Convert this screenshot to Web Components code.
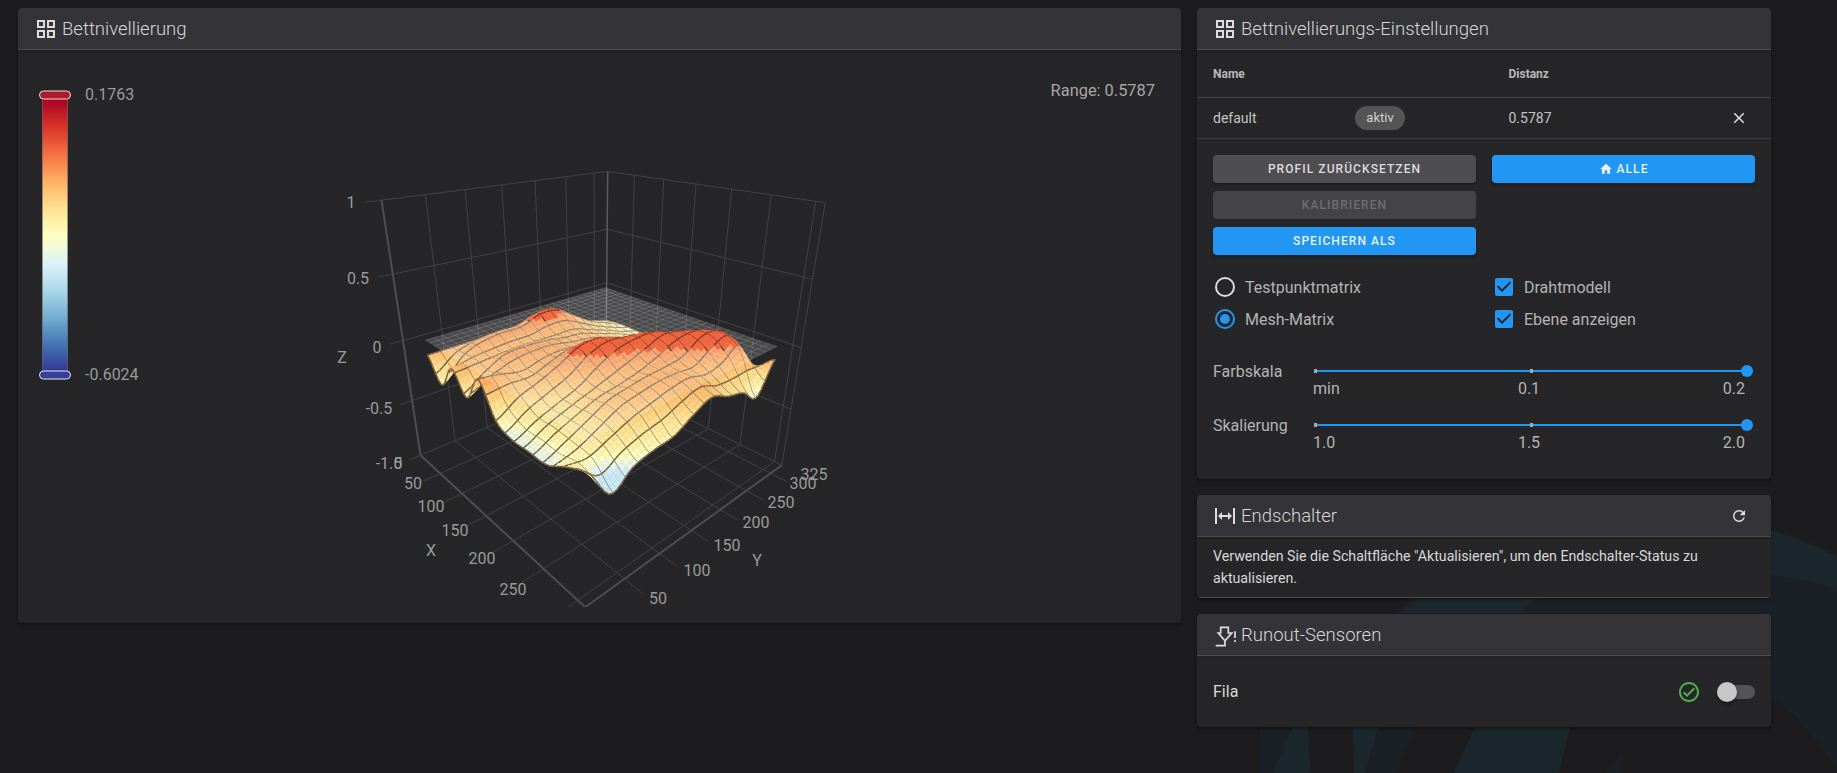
<!DOCTYPE html>
<html lang="de"><head><meta charset="utf-8"><title>Heightmap</title>
<style>
html,body{margin:0;padding:0;height:773px;overflow:hidden;background:#1c1c1e;font-family:Roboto,"Liberation Sans",sans-serif;color:#ddd}
</style></head><body>
<kl-page>
  <kl-panel slot="left" heading="Bettnivellierung" icon="grid"><bed-plot></bed-plot></kl-panel>
  <div slot="right" style="display:contents">
    <kl-panel heading="Bettnivellierungs-Einstellungen" icon="grid"><mesh-settings></mesh-settings></kl-panel>
    <kl-panel heading="Endschalter" icon="endstop" action="refresh"><endstop-note>Verwenden Sie die Schaltfläche "Aktualisieren", um den Endschalter-Status zu aktualisieren.</endstop-note></kl-panel>
    <kl-panel heading="Runout-Sensoren" icon="runout"><sensor-row name="Fila"></sensor-row></kl-panel>
  </div>
</kl-page>
<script>
const ICON={
grid:'M3 11H11V3H3M5 5H9V9H5M13 21H21V13H13M15 15H19V19H15M3 21H11V13H3M5 15H9V19H5M13 3V11H21V3M19 9H15V5H19Z',
endstop:'M9,11H15V8L19,12L15,16V13H9V16L5,12L9,8V11M2,20V4H4V20H2M20,20V4H22V20H20Z',
refresh:'M17.65,6.35C16.2,4.9 14.21,4 12,4A8,8 0 0,0 4,12A8,8 0 0,0 12,20C15.73,20 18.84,17.45 19.73,14H17.65C16.83,16.33 14.61,18 12,18A6,6 0 0,1 6,12A6,6 0 0,1 12,6C13.66,6 15.14,6.69 16.22,7.78L13,11H20V4L17.65,6.35Z',
close:'M19,6.41L17.59,5L12,10.59L6.41,5L5,6.41L10.59,12L5,17.59L6.41,19L12,13.41L17.59,19L19,17.59L13.41,12L19,6.41Z',
home:'M10,20V14H14V20H19V12H22L12,3L2,12H5V20H10Z',
radio:'M12,20A8,8 0 0,1 4,12A8,8 0 0,1 12,4A8,8 0 0,1 20,12A8,8 0 0,1 12,20M12,2A10,10 0 0,0 2,12A10,10 0 0,0 12,22A10,10 0 0,0 22,12A10,10 0 0,0 12,2Z',
radioOn:'M12,20A8,8 0 0,1 4,12A8,8 0 0,1 12,4A8,8 0 0,1 20,12A8,8 0 0,1 12,20M12,2A10,10 0 0,0 2,12A10,10 0 0,0 12,22A10,10 0 0,0 22,12A10,10 0 0,0 12,2M12,7A5,5 0 0,0 7,12A5,5 0 0,0 12,17A5,5 0 0,0 17,12A5,5 0 0,0 12,7Z',
check:'M10,17L5,12L6.41,10.58L10,14.17L17.59,6.58L19,8M19,3H5C3.89,3 3,3.89 3,5V19A2,2 0 0,0 5,21H19A2,2 0 0,0 21,19V5C21,3.89 20.1,3 19,3Z',
okCircle:'M12 2C6.5 2 2 6.5 2 12S6.5 22 12 22 22 17.5 22 12 17.5 2 12 2M12 20C7.59 20 4 16.41 4 12S7.59 4 12 4 20 7.59 20 12 16.41 20 12 20M16.59 7.58L10 14.17L7.41 11.59L6 13L10 17L18 9L16.59 7.58Z'
};
function svgIcon(name,size,color){return `<svg width="${size}" height="${size}" viewBox="0 0 24 24" style="display:block;flex:none"><path fill="${color}" d="${ICON[name]}"/></svg>`}
const RUNOUT=`<svg width="24" height="24" viewBox="0 0 24 24" style="display:block;flex:none" fill="none" stroke="#ddd" stroke-width="1.7"><path d="M7.7 4.3H15.3V10H18.7L12 17.7L5.3 10H7.7Z"/><path d="M2.7 22.7H12V17.7"/><path d="M22 8.3V15M22 17V19"/></svg>`;

class KlPage extends HTMLElement{constructor(){super();this.attachShadow({mode:'open'}).innerHTML=`<style>
:host{display:block;position:relative;width:1837px;height:773px;overflow:hidden}
.logo{position:absolute;left:0;top:0;z-index:0}
.grid{position:relative;z-index:1;display:grid;grid-template-columns:1163px 574px;column-gap:16px;padding:8px 66px 0 18px;align-items:start}
.col{display:flex;flex-direction:column;gap:16px}
</style>
<svg class="logo" width="1837" height="773" viewBox="0 0 1837 773">
<path fill="#1b2026" d="M1395 613L1420 590H1772V700C1800 720 1820 745 1837 770V773H1260V700H1771V613Z"/>
<path fill="#1c272d" d="M1760 528C1790 534 1815 545 1837 557V590C1815 582 1795 578 1760 574Z"/>
<path fill="#1b2026" d="M1760 574C1795 578 1815 582 1837 590V773H1770C1790 773 1760 700 1760 690Z"/>
<path fill="#1c1c1e" d="M1772 697C1800 715 1820 745 1837 771V773H1772Z"/>
<path fill="#1c272d" d="M1402 613L1420 596H1540L1520 613Z"/>
<path fill="#1c272d" d="M1273 773L1296 720H1307L1311 773Z"/>
<path fill="#1c272d" d="M1352 720H1380L1365 773H1354Z"/>
<path fill="#1c1c1e" d="M1311 773L1307 720H1352L1354 773Z"/>
<path fill="#1c1c1e" d="M1420 720L1396 773H1454L1478 720Z"/>
<path fill="#1c272d" d="M1454 773L1478 720H1572L1559 773Z" opacity=".9"/>
<path fill="#1c1c1e" d="M1559 773L1572 720H1772V773Z"/>
<path fill="#1b2026" d="M1604 773L1625 750L1620 773Z"/>
</svg>
<div class="grid"><div><slot name="left"></slot></div><div class="col"><slot name="right"></slot></div></div>`}}
customElements.define('kl-page',KlPage);

class KlPanel extends HTMLElement{connectedCallback(){if(this.shadowRoot)return;
const ic=this.getAttribute('icon');const a=this.getAttribute('action');
this.attachShadow({mode:'open'}).innerHTML=`<style>
:host{display:block;background:#262628;border-radius:4px;box-shadow:0 2px 3px rgba(0,0,0,.35);overflow:hidden}
header{display:flex;align-items:center;height:41px;padding:0 23px 0 16px;background:#333338;border-bottom:1px solid #4c4c50;box-shadow:0 2px 4px rgba(0,0,0,.2);position:relative}
h2{margin:0 0 0 4px;font:300 18.55px/24px Roboto,sans-serif;color:#d6d6d6;flex:1}
</style><header>${ic==='runout'?RUNOUT:svgIcon(ic,24,'#ddd')}<h2>${this.getAttribute('heading')}</h2>${a?svgIcon(a,18,'#ddd'):''}</header><slot></slot>`}}
customElements.define('kl-panel',KlPanel);

class KlButton extends HTMLElement{connectedCallback(){if(this.shadowRoot)return;
this.attachShadow({mode:'open'}).innerHTML=`<style>
:host{display:flex;align-items:center;justify-content:center;gap:4px;height:28px;border-radius:4px;background:#4d4d52;color:#dcdcdc;font:500 12px/1 Roboto,sans-serif;letter-spacing:1.07px;box-shadow:0 2px 2px rgba(0,0,0,.25)}
:host([kind=primary]){background:#2196f3;color:#e4f0fa}
:host([disabled]){background:#444446;color:#6f6f71;box-shadow:none}
</style>${this.hasAttribute('home')?svgIcon('home',14,'#e4f0fa'):''}<slot></slot>`}}
customElements.define('kl-button',KlButton);

class KlOption extends HTMLElement{connectedCallback(){if(this.shadowRoot)return;
const t=this.getAttribute('type');const on=this.hasAttribute('on');
const icon=t==='check'?svgIcon('check',24,'#2196f3'):on?svgIcon('radioOn',24,'#2196f3'):svgIcon('radio',24,'#dcdcdc');
this.attachShadow({mode:'open'}).innerHTML=`<style>
:host{display:flex;align-items:center;gap:8px;height:32px;font:400 16px/24px Roboto,sans-serif;color:#b4b4b4}
div{padding-top:1px}
</style>${icon}<div><slot></slot></div>`}}
customElements.define('kl-option',KlOption);

class KlSlider extends HTMLElement{connectedCallback(){if(this.shadowRoot)return;
const t=this.getAttribute('ticks').split(',');
this.attachShadow({mode:'open'}).innerHTML=`<style>
:host{display:grid;grid-template-columns:102px 432px;height:54px;font:400 16px/20px Roboto,sans-serif;color:#b4b4b4}
.lab{height:24px;line-height:26px}
.tr{height:2px;background:#2196f3;margin-top:11px;position:relative}
.t{position:absolute;top:-1px;width:3px;height:4px;background:#a8a8a8}
.k{position:absolute;right:-6px;top:-5px;width:12px;height:12px;border-radius:50%;background:#2196f3}
.ticks{display:grid;grid-template-columns:1fr auto 1fr;margin:7px 0 0 -2px;width:432px}
.ticks span:last-child{justify-self:end}
</style><div class="lab">${this.getAttribute('label')}</div>
<div><div class="tr"><i class="t" style="left:-1px"></i><i class="t" style="left:215px"></i><i class="k"></i></div>
<div class="ticks"><span>${t[0]}</span><span>${t[1]}</span><span>${t[2]}</span></div></div>`}}
customElements.define('kl-slider',KlSlider);

class MeshSettings extends HTMLElement{constructor(){super();this.attachShadow({mode:'open'}).innerHTML=`<style>
:host{display:block;font:400 14px/20px Roboto,sans-serif;color:#c4c4c4}
.r{display:grid;grid-template-columns:142px 153.5px 1fr 36px;align-items:center;padding:0 16px;}
.head{height:47px;border-bottom:1px solid #434345;font-weight:700;font-size:12px;color:#b8b8b8}
.row{height:40px;border-bottom:1px solid #3c3c3e}
.chip{display:inline-flex;align-items:center;justify-content:center;width:50px;height:24px;border-radius:12px;background:#555;font-size:13px;color:#d0d0d0}
.x{justify-self:end;margin-right:7px}
.acts{display:grid;grid-template-columns:263px 263px;column-gap:16px;row-gap:8px;padding:16px 16px 0}
.opts{display:grid;grid-template-columns:263px 263px;column-gap:16px;padding:16px 16px 0}
.sl{padding:24px 16px 12px}
</style>
<div class="r head"><span>Name</span><span></span><span style="grid-column:3">Distanz</span></div>
<div class="r row"><span>default</span><span><span class="chip">aktiv</span></span><span>0.5787</span><span class="x">${svgIcon('close',18,'#ddd')}</span></div>
<div class="acts"><kl-button>PROFIL ZURÜCKSETZEN</kl-button><kl-button kind="primary" home>ALLE</kl-button>
<kl-button disabled style="grid-column:1">KALIBRIEREN</kl-button><kl-button kind="primary" style="grid-column:1">SPEICHERN ALS</kl-button></div>
<div class="opts"><kl-option type="radio">Testpunktmatrix</kl-option><kl-option type="check" on>Drahtmodell</kl-option>
<kl-option type="radio" on>Mesh-Matrix</kl-option><kl-option type="check" on>Ebene anzeigen</kl-option></div>
<div class="sl"><kl-slider label="Farbskala" ticks="min,0.1,0.2"></kl-slider><kl-slider label="Skalierung" ticks="1.0,1.5,2.0"></kl-slider></div>`}}
customElements.define('mesh-settings',MeshSettings);

class EndstopNote extends HTMLElement{constructor(){super();this.attachShadow({mode:'open'}).innerHTML=`<style>
:host{display:block;padding:8px 16px 8px;font:400 14.2px/22px Roboto,sans-serif;color:#d8d8d8;border-bottom:1px solid #4a4a4c}
</style><slot></slot>`}}
customElements.define('endstop-note',EndstopNote);

class SensorRow extends HTMLElement{connectedCallback(){if(this.shadowRoot)return;
this.attachShadow({mode:'open'}).innerHTML=`<style>
:host{display:flex;align-items:center;height:71px;padding:0 16px;font:400 16px/20px Roboto,sans-serif;color:#d8d8d8}
span{flex:1;padding-top:1px}
.sw{position:relative;width:38px;height:20px;margin-left:16px}
.sw i{position:absolute;left:1px;right:0;top:3px;height:14px;border-radius:7px;background:#545456}
.sw b{position:absolute;left:0;top:0;width:20px;height:20px;border-radius:50%;background:#c8c8c8;box-shadow:0 2px 3px rgba(0,0,0,.4)}
</style><span>${this.getAttribute('name')}</span>${svgIcon('okCircle',24,'#4caf50')}<div class="sw"><i></i><b></b></div>`}}
customElements.define('sensor-row',SensorRow);

/* ---------- 3D plot ---------- */
const XM=310,YM=325;
function solveDLT(P){
  const n=11,A=Array.from({length:n},()=>new Array(n+1).fill(0));
  for(const [X,Y,Z,px,py] of P){
    const x=X/XM,y=Y/YM,z=Z,u=(px-600)/300,v=(py-400)/300;
    for(const r of [[x,y,z,1,0,0,0,0,-u*x,-u*y,-u*z,u],[0,0,0,0,x,y,z,1,-v*x,-v*y,-v*z,v]])
      for(let i=0;i<n;i++)for(let j=0;j<=n;j++)A[i][j]+=r[i]*r[j];
  }
  for(let c=0;c<n;c++){let m=c;for(let r=c+1;r<n;r++)if(Math.abs(A[r][c])>Math.abs(A[m][c]))m=r;
    [A[c],A[m]]=[A[m],A[c]];
    for(let r=0;r<n;r++)if(r!==c){const f=A[r][c]/A[c][c];for(let j=c;j<=n;j++)A[r][j]-=f*A[c][j]}}
  return A.map((r,i)=>r[n]/r[i]);
}
const M=solveDLT([
[0,0,-1,421.7,456],[0,0,1,381,200],[0,0,.5,392.7,274.3],[0,0,0,402.7,340.7],[0,0,-.5,411.7,400.7],
[XM,0,-1,583,607],
[XM,YM,-1,783,465],[XM,YM,1,825,202.7],[XM,YM,.5,813,279],[XM,YM,0,801,348],[XM,YM,-.5,790.7,408],
[0,YM,1,606.7,171.7],[0,YM,.5,606.7,229.3],[0,YM,0,606.7,282.7],
[0,50,1,426.7,194],[0,150,1,502.3,184.3],[0,250,1,565.7,176],
[50,YM,1,633.3,175],[150,YM,1,696.7,185],[250,YM,1,772.3,196]
]);
function pr(X,Y,Z){const x=X/XM,y=Y/YM,z=Z,w=M[8]*x+M[9]*y+M[10]*z+1;
  return [600+300*(M[0]*x+M[1]*y+M[2]*z+M[3])/w,400+300*(M[4]*x+M[5]*y+M[6]*z+M[7])/w]}
const L=(a,b,s,w)=>{const p=pr(...a),q=pr(...b);return `<line x1="${p[0].toFixed(1)}" y1="${p[1].toFixed(1)}" x2="${q[0].toFixed(1)}" y2="${q[1].toFixed(1)}" stroke="${s}" stroke-width="${w}"/>`};

const H=[
[-.12,-.12,-.12,-.12,-.12,-.10,-.08,-.18,-.24,-.28,-.32],
[-.30,-.12,-.05,-.03,-.03,.03,.02,-.08,-.18,-.24,-.30],
[-.10,-.10,-.10,-.09,-.09,-.08,-.08,-.14,-.20,-.26,-.30],
[-.26,-.14,-.05,-.04,-.05,-.08,-.10,-.15,-.20,-.26,-.30],
[-.05,-.08,-.12,-.08,-.06,-.08,-.10,-.14,-.20,-.24,-.26],
[-.28,-.18,-.12,-.05,.03,.04,-.02,-.06,-.12,-.17,-.20],
[-.34,-.26,-.20,-.14,-.04,.03,.05,.04,-.03,-.09,-.15],
[-.34,-.26,-.20,-.15,-.12,-.08,-.02,.05,.05,.00,-.12],
[-.34,-.28,-.20,-.12,-.09,-.07,-.07,-.06,.04,.05,-.07],
[-.26,-.30,-.24,-.18,-.14,-.10,-.08,-.12,-.10,-.02,-.22],
[-.20,-.44,-.34,-.30,-.28,-.20,-.14,-.20,-.24,-.34,-.10]];
const cr=(a,b,c,d,t)=>.5*(2*b+(c-a)*t+(2*a-5*b+4*c-d)*t*t+(3*b-a-3*c+d)*t*t*t);
function hAt(u,v){const n=10,fu=Math.min(u*n,n-1e-6),fv=Math.min(v*n,n-1e-6),i=Math.floor(fu),j=Math.floor(fv),tu=fu-i,tv=fv-j;
  const g=(a,b)=>H[Math.max(0,Math.min(n,a))][Math.max(0,Math.min(n,b))];
  const col=k=>cr(g(i+k,j-1),g(i+k,j),g(i+k,j+1),g(i+k,j+2),tv);
  return cr(col(-1),col(0),col(1),col(2),tu)}
const STOPS=[[49,54,149],[69,117,180],[116,173,209],[171,217,233],[224,243,248],[255,255,191],[254,224,144],[253,174,97],[244,109,67],[215,48,39],[165,0,38]];
function colr(t){t=Math.max(0,Math.min(.9999,t))*10;const i=Math.floor(t),f=t-i,a=STOPS[i],b=STOPS[i+1];
  return `rgb(${a.map((c,k)=>Math.round(c+(b[k]-c)*f)).join(',')})`}
const tOf=z=>z>=0?.8+z*.3:z>-.28?.76+.8*z:Math.max(.36,.536+(z+.28)*2);
const XA=16,XB=291,YA=20,YB=307,Z0=0;
function buildMesh(){
  const cells=18,sub=3,N=cells*sub;let below='',above='';
  const Xs=i=>XA+(XB-XA)*i/N,Ys=j=>YA+(YB-YA)*j/N,Zf=[];
  for(let i=0;i<=N;i++){Zf[i]=[];for(let j=0;j<=N;j++)Zf[i][j]=hAt(i/N,j/N)}
  const pt=(i,j)=>pr(Xs(i),Ys(j),Zf[i][j]);
  const f=p=>p[0].toFixed(1)+','+p[1].toFixed(1);
  for(let i=0;i<N;i++)for(let j=N-1;j>=0;j--){
    const a=pt(i,j),b=pt(i+1,j),c=pt(i+1,j+1),d=pt(i,j+1);
    const z=(Zf[i][j]+Zf[i+1][j]+Zf[i+1][j+1]+Zf[i][j+1])/4;
    const col=colr(tOf(z));
    const wire=z>=Z0?'rgb(135,62,40)':'rgb(120,98,70)';
    let s=`<polygon points="${f(a)} ${f(b)} ${f(c)} ${f(d)}" fill="${col}" stroke="${col}" stroke-width=".5"/>`;
    const seg=(p,q)=>`<line x1="${p[0].toFixed(1)}" y1="${p[1].toFixed(1)}" x2="${q[0].toFixed(1)}" y2="${q[1].toFixed(1)}" stroke="${wire}" stroke-width="1.5"/>`;
    if(i%sub===0)s+=seg(a,d);
    if(j%sub===0)s+=seg(a,b);
    if(i+1===N)s+=seg(b,c);
    if(j+1===N)s+=seg(d,c);
    if(z<Z0)below+=s;else above+=s;
  }
  let pl=`<polygon points="${f(pr(XA,YA,Z0))} ${f(pr(XB,YA,Z0))} ${f(pr(XB,YB,Z0))} ${f(pr(XA,YB,Z0))}" fill="rgba(255,255,255,.17)"/>`;
  const PN=26;for(let k=0;k<=PN;k++){const x=XA+(XB-XA)*k/PN,y=YA+(YB-YA)*k/PN;
    pl+=L([x,YA,Z0],[x,YB,Z0],'rgba(255,255,255,.14)',1)+L([XA,y,Z0],[XB,y,Z0],'rgba(255,255,255,.14)',1)}
  return below+pl+above;
}
function buildBox(){
  const g='#424244',g2='#4e4e50';let s='';
  const ys=[50,100,150,200,250,300],xs=[50,100,150,200,250,300],zs=[-1,-.5,0,.5,1];
  for(const y of ys){s+=L([0,y,-1],[0,y,1],g,1)+L([0,y,-1],[XM+22,y,-1],g,1)}
  for(const x of xs){s+=L([x,YM,-1],[x,YM,1],g,1)+L([x,YM,-1],[x,-26,-1],g,1)}
  for(const z of zs){s+=L([0,-16,z],[0,YM,z],g,1)+L([0,YM,z],[XM,YM,z],g,1)}
  s+=L([0,YM,-1],[0,YM,1],'#5c5c5e',1.5);
  s+=L([XM,YM,-1],[XM,YM,1],g,1);
  s+=L([0,0,-1],[0,0,1],g2,2)+L([0,0,-1],[XM,0,-1],g2,2)+L([XM,0,-1],[XM,YM,-1],g2,2);
  return s;
}
const LABELS=[['1',351,202],['0.5',358,278],['0',377,347],['Z',342,357],['-0.5',379,408],['-1.5',389,463],['0',398,463],
['50',413,483],['100',431,506],['150',455,530],['200',482,558],['250',513,589],['X',431,550],
['50',658,598],['100',697,570],['150',727,545],['200',756,522],['250',781,502],['300',803,483],['325',814,474],['Y',757,560]];
class BedPlot extends HTMLElement{constructor(){super();
const stops=STOPS.map((c,i)=>`<stop offset="${i/10}" stop-color="rgb(${c.join(',')})"/>`).join('');
this.attachShadow({mode:'open'}).innerHTML=`<style>
:host{display:block;height:573px}
svg{display:block}
text{font:400 16px Roboto,sans-serif;fill:#9a9a9a}
.rng{font-size:16.4px;fill:#a6a6a6}
</style>
<svg width="1163" height="573" viewBox="18 50 1163 573">
<defs><linearGradient id="cb" x1="0" y1="1" x2="0" y2="0">${stops}</linearGradient>
<clipPath id="pc"><rect x="300" y="120" width="600" height="487"/></clipPath></defs>
<rect x="42.3" y="98" width="25.4" height="274" fill="url(#cb)" stroke="#777" stroke-width=".5"/>
<rect x="39.5" y="91" width="31" height="8" rx="4" fill="#b2182b" stroke="#e4e0d8" stroke-width="1"/>
<rect x="39.5" y="371" width="31" height="8" rx="4" fill="#35409a" stroke="#e4e4ec" stroke-width="1"/>
<text x="85" y="94" dominant-baseline="central">0.1763</text>
<text x="85" y="374" dominant-baseline="central">-0.6024</text>
<text class="rng" x="1155" y="90" text-anchor="end" dominant-baseline="central">Range: 0.5787</text>
<g clip-path="url(#pc)">${buildBox()}${buildMesh()}</g>
${LABELS.map(l=>`<text x="${l[1]}" y="${l[2]}" text-anchor="middle" dominant-baseline="central">${l[0]}</text>`).join('')}
</svg>`}}
customElements.define('bed-plot',BedPlot);
</script>
</body></html>
